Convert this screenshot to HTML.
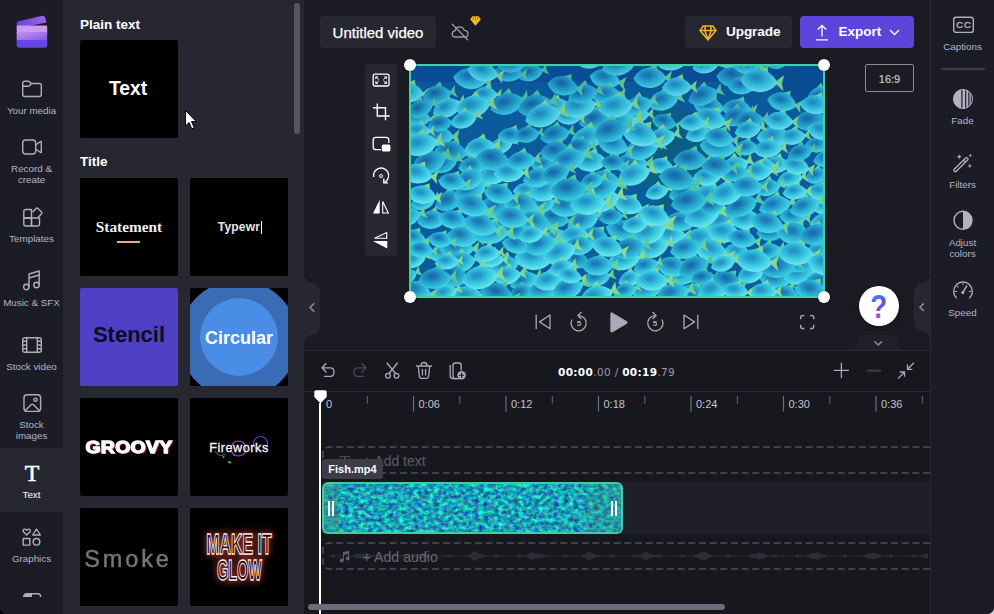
<!DOCTYPE html>
<html lang="en">
<head>
<meta charset="utf-8">
<title>Clipchamp</title>
<style>
*{box-sizing:border-box;margin:0;padding:0}
html,body{width:994px;height:614px;overflow:hidden;background:linear-gradient(90deg,#000 50%,#d4d4dc 50%);font-family:"Liberation Sans",sans-serif;color:#fff}
.abs{position:absolute}
#app{position:relative;width:994px;height:614px;overflow:hidden;background:#1b1b24;border-radius:0 0 7px 7px}
/* left sidebar */
#side{left:0;top:0;width:63px;height:614px;background:#1c1c26}
.nav{position:absolute;left:0;width:63px;text-align:center;font-size:9.8px;line-height:12px;color:#b4b4c6}
.nav svg{position:absolute;left:50%;transform:translateX(-50%)}
.nav span{position:absolute;left:0;width:63px;text-align:center;white-space:nowrap}
/* panel */
#panel{left:63px;top:0;width:241px;height:614px;background:#272731}
.hd{position:absolute;left:17px;font-size:13.5px;font-weight:bold;color:#fff}
.th{position:absolute;width:98px;height:98px;background:#000;overflow:hidden;border-radius:2px}
.th div{position:absolute;left:0;width:98px;text-align:center;white-space:nowrap}
/* right */
#right{left:930px;top:0;width:64px;height:614px;background:#1c1c26;border-left:1px solid #2a2a34}
.rn{position:absolute;left:0;width:63px;text-align:center;font-size:9.8px;line-height:12px;color:#b4b4c6}
/* timeline */
#tl{left:304px;top:350px;width:626px;height:264px;background:#17171e;border-top:1px solid #2a2a34}
.hdl{width:12px;height:12px;border-radius:50%;background:#fff;box-shadow:0 0 2px rgba(0,0,0,.5)}
</style>
</head>
<body>
<div id="app">
<div id="main" class="abs" style="left:304px;top:0;width:626px;height:350px">
 <!-- left collapse tab -->
 <svg class="abs" style="left:0;top:274px" width="17" height="70" viewBox="0 0 17 70"><path d="M0 0 Q0 7 7 9 Q16 10 16 18 V52 Q16 60 7 61 Q0 63 0 70 Z" fill="#272731"/><path d="M10.300 29.300 L6 33.500 L10.300 37.700" fill="none" stroke="#8d8d9c" stroke-width="1.500"/></svg>
 <!-- title -->
 <div class="abs" style="left:16px;top:16px;width:116px;height:32px;border-radius:4px;background:#272731;font-size:15px;line-height:33px;text-align:center;color:#fff;-webkit-text-stroke:.25px #fff">Untitled video</div>
 <!-- cloud off -->
 <svg class="abs" style="left:146px;top:22px" width="20" height="20" viewBox="0 0 20 20" fill="none" stroke="#9a9aac" stroke-width="1.300" stroke-linecap="round"><path d="M5.500 15 Q2.200 15 2.200 11.800 Q2.200 9 5.200 8.600 Q5.800 4.800 9.800 4.800 Q13.300 4.800 14.200 8.300 Q18 8.300 18 11.700 Q18 15 14.800 15 Z"/><path d="M2.300 2.300 L17.700 17.700"/></svg>
 <!-- small diamond -->
 <svg class="abs" style="left:165.500px;top:15.500px" width="11" height="10" viewBox="0 0 11 10"><path d="M2.300 .3 H8.700 L10.800 3.500 L5.500 9.700 L.2 3.500 Z" fill="#f3b62b"/><path d="M3.300 1 V4.300 M5.500 1 V4.300 M7.700 1 V4.300" stroke="#8a5a10" stroke-width=".6"/></svg>
 <!-- Upgrade -->
 <div class="abs" style="left:381px;top:16px;width:107px;height:32px;border-radius:4px;background:#272731"></div>
 <svg class="abs" style="left:394.500px;top:24.500px" width="18" height="16" viewBox="0 0 18 16" fill="none" stroke="#f3b62b" stroke-width="1.500" stroke-linejoin="round"><path d="M4.200 1 H13.800 L17 5.600 L9 14.800 L1 5.600 Z"/><path d="M1 5.600 H17 M6.300 1 L5.800 5.600 L9 14.800 L12.200 5.600 L11.700 1"/></svg>
 <div class="abs" id="t_upg" style="left:422px;top:16px;height:32px;line-height:32px;font-size:13.600px;letter-spacing:-.1px;font-weight:bold;color:#fff">Upgrade</div>
 <!-- Export -->
 <div class="abs" style="left:496px;top:16px;width:114px;height:32px;border-radius:4px;background:#5b45db"></div>
 <svg class="abs" style="left:511px;top:24px" width="14" height="17" viewBox="0 0 14 17" fill="none" stroke="#fff" stroke-width="1.300"><path d="M7 12.500 V1.500 M2.800 5.500 L7 1.300 L11.200 5.500 M1 15.800 H13"/></svg>
 <div class="abs" id="t_exp" style="left:534.500px;top:16px;height:32px;line-height:32px;font-size:13.500px;font-weight:bold;color:#fff">Export</div>
 <svg class="abs" style="left:585px;top:29px" width="11" height="7" viewBox="0 0 11 7" fill="none" stroke="#fff" stroke-width="1.300"><path d="M1 1 L5.500 5.500 L10 1"/></svg>
 <!-- tool strip -->
 <div class="abs" style="left:61px;top:64px;width:32px;height:192px;border-radius:4px;background:#272731"></div>
 <svg class="abs" style="left:61px;top:64px" width="32" height="192" viewBox="0 0 32 192" fill="none" stroke="#fff" stroke-width="1.300">
  <!-- fit -->
  <rect x="8.200" y="10.200" width="15.800" height="11.800" rx="2"/>
  <path d="M10.800 15 V12.900 H12.900 M10.800 12.900 L13.800 15.500 M21.400 15 V12.900 H19.300 M21.400 12.900 L18.400 15.500 M10.800 17.300 V19.400 H12.900 M10.800 19.400 L13.800 16.800 M21.400 17.300 V19.400 H19.300 M21.400 19.400 L18.400 16.800" stroke-width="1"/>
  <!-- crop -->
  <path d="M12.300 39.500 V52 H24.700 M8 43.700 H20.500 V56.200" stroke-width="1.400"/>
  <!-- pip -->
  <path d="M16 85.700 H11 Q8.200 85.700 8.200 83 V76 Q8.200 73.300 11 73.300 H21 Q23.800 73.300 23.800 76 V79"/>
  <rect x="16.800" y="80.600" width="8.600" height="7" rx="1.500" fill="#fff" stroke="none"/>
  <!-- rotate -->
  <path d="M8.600 113 A7.600 7.600 0 1 1 19.500 118.400"/><path d="M18.800 114.600 V118.900 H23" stroke-width="1.300"/><circle cx="16" cy="112" r="1.500" stroke-width="1"/>
  <!-- flip h -->
  <path d="M14.700 135.800 V149.500 H8 Z" fill="#fff" stroke="none"/><path d="M17.700 137.500 V149 H23.300 Z" stroke-width="1.100"/>
  <!-- flip v -->
  <path d="M21.700 168.500 V174.300 H9.500 Z" stroke-width="1.100"/><path d="M7.800 177 H22.300 V184.400 Z" fill="#fff" stroke="none"/>
 </svg>
 <!-- video -->
 <div class="abs" style="left:105px;top:64px;width:416px;height:234px;background:#3fd2a4"></div>
 <div class="abs" style="left:107px;top:66px;width:412px;height:230px;overflow:hidden"><svg width="412" height="230" viewBox="0 0 412 230"><defs><radialGradient id="mg0" cx="42%" cy="38%" r="62%"><stop offset=".12" stop-color="#1c7ab8"/><stop offset=".55" stop-color="#2ab4d6"/><stop offset="1" stop-color="#50dcea"/></radialGradient><g id="m0"><path d="M9 0 L14.500 -5 L13.500 0 L15 4.500 ZM-1 -6.500 L4 -9.500 L5 -5 Z" fill="#68d092"/><path d="M-11 0.500 Q-7 -7.500 2 -7 Q8 -5 11 0 Q8 5.500 1 6.500 Q-7 7 -11 0.500 Z" fill="url(#mg0)"/></g><radialGradient id="mg1" cx="42%" cy="38%" r="62%"><stop offset=".12" stop-color="#2294c6"/><stop offset=".55" stop-color="#38c8e0"/><stop offset="1" stop-color="#6ee8f0"/></radialGradient><g id="m1"><path d="M9 0 L14.500 -5 L13.500 0 L15 4.500 ZM-1 -6.500 L4 -9.500 L5 -5 Z" fill="#86d88a"/><path d="M-11 0.500 Q-7 -7.500 2 -7 Q8 -5 11 0 Q8 5.500 1 6.500 Q-7 7 -11 0.500 Z" fill="url(#mg1)"/></g><radialGradient id="mg2" cx="42%" cy="38%" r="62%"><stop offset=".12" stop-color="#186eac"/><stop offset=".55" stop-color="#24a2cc"/><stop offset="1" stop-color="#3ed0e2"/></radialGradient><g id="m2"><path d="M9 0 L14.500 -5 L13.500 0 L15 4.500 ZM-1 -6.500 L4 -9.500 L5 -5 Z" fill="#58c69a"/><path d="M-11 0.500 Q-7 -7.500 2 -7 Q8 -5 11 0 Q8 5.500 1 6.500 Q-7 7 -11 0.500 Z" fill="url(#mg2)"/></g></defs><rect width="412" height="230" fill="#0b5c9e"/><rect width="412" height="16" fill="#0a4f96"/><ellipse cx="262" cy="92" rx="36" ry="50" fill="#0b5f86"/><rect x="372" y="0" width="40" height="40" fill="#0a4f96"/><rect x="0" y="100" width="60" height="45" fill="#0a5298"/><use href="#m0" transform="translate(172 155) rotate(-21) scale(1.54)"/><use href="#m1" transform="translate(312 155) rotate(-21) scale(1.69)"/><use href="#m0" transform="translate(192 116) rotate(1) scale(1.65)"/><use href="#m0" transform="translate(271 208) rotate(-2) scale(1.66)"/><use href="#m1" transform="translate(250 100) rotate(9) scale(1.14)"/><use href="#m1" transform="translate(36 42) rotate(-21) scale(1.39)"/><use href="#m2" transform="translate(323 11) rotate(5) scale(1.61)"/><use href="#m0" transform="translate(4 51) rotate(9) scale(1.46)"/><use href="#m1" transform="translate(413 140) rotate(-4) scale(1.24)"/><use href="#m2" transform="translate(143 152) rotate(12) scale(1.43)"/><use href="#m2" transform="translate(38 135) rotate(-21) scale(1.40)"/><use href="#m0" transform="translate(335 82) rotate(-4) scale(1.13)"/><use href="#m1" transform="translate(259 169) rotate(2) scale(1.46)"/><use href="#m0" transform="translate(364 214) rotate(7) scale(1.40)"/><use href="#m2" transform="translate(253 56) rotate(14) scale(1.14)"/><use href="#m0" transform="translate(26 70) rotate(3) scale(1.53)"/><use href="#m2" transform="translate(29 58) rotate(-9) scale(1.13)"/><use href="#m1" transform="translate(390 208) rotate(-15) scale(1.59)"/><use href="#m0" transform="translate(21 154) rotate(-7) scale(1.35)"/><use href="#m0" transform="translate(211 165) rotate(16) scale(1.52)"/><use href="#m0" transform="translate(298 41) rotate(8) scale(1.39)"/><use href="#m0" transform="translate(59 125) rotate(-20) scale(1.55)"/><use href="#m2" transform="translate(292 30) rotate(-18) scale(1.42)"/><use href="#m0" transform="translate(113 215) rotate(-19) scale(1.35)"/><use href="#m2" transform="translate(40 86) rotate(7) scale(1.51)"/><use href="#m2" transform="translate(119 7) rotate(-12) scale(1.24)"/><use href="#m1" transform="translate(145 40) rotate(-13) scale(1.15)"/><use href="#m0" transform="translate(411 217) rotate(2) scale(1.69)"/><use href="#m0" transform="translate(133 99) rotate(1) scale(1.20)"/><use href="#m2" transform="translate(279 94) rotate(1) scale(1.54)"/><use href="#m0" transform="translate(2 172) rotate(12) scale(1.21)"/><use href="#m0" transform="translate(335 -1) rotate(9) scale(1.33)"/><use href="#m1" transform="translate(225 49) rotate(-3) scale(1.23)"/><use href="#m1" transform="translate(242 182) rotate(-15) scale(1.48)"/><use href="#m2" transform="translate(165 194) rotate(16) scale(1.27)"/><use href="#m1" transform="translate(246 126) rotate(-15) scale(1.11)"/><use href="#m0" transform="translate(269 156) rotate(4) scale(1.44)"/><use href="#m0" transform="translate(416 93) rotate(-8) scale(1.26)"/><use href="#m0" transform="translate(59 13) rotate(9) scale(1.54)"/><use href="#m1" transform="translate(238 167) rotate(-21) scale(1.64)"/><use href="#m1" transform="translate(290 173) rotate(-4) scale(1.60)"/><use href="#m2" transform="translate(387 198) rotate(9) scale(1.30)"/><use href="#m2" transform="translate(184 54) rotate(-10) scale(1.50)"/><use href="#m2" transform="translate(110 227) rotate(-16) scale(1.12)"/><use href="#m1" transform="translate(287 68) rotate(-14) scale(1.18)"/><use href="#m1" transform="translate(157 51) rotate(6) scale(1.18)"/><use href="#m0" transform="translate(93 199) rotate(-7) scale(1.37)"/><use href="#m1" transform="translate(363 71) rotate(-1) scale(1.60)"/><use href="#m0" transform="translate(374 229) rotate(13) scale(1.33)"/><use href="#m1" transform="translate(416 50) rotate(-21) scale(1.12)"/><use href="#m1" transform="translate(260 -6) rotate(0) scale(1.61)"/><use href="#m0" transform="translate(62 100) rotate(-6) scale(1.36)"/><use href="#m1" transform="translate(217 139) rotate(15) scale(1.39)"/><use href="#m1" transform="translate(144 172) rotate(-16) scale(1.27)"/><use href="#m1" transform="translate(326 186) rotate(9) scale(1.22)"/><use href="#m0" transform="translate(364 140) rotate(-12) scale(1.50)"/><use href="#m0" transform="translate(400 225) rotate(14) scale(1.55)"/><use href="#m2" transform="translate(144 69) rotate(-12) scale(1.39)"/><use href="#m1" transform="translate(340 208) rotate(-20) scale(1.34)"/><use href="#m1" transform="translate(168 41) rotate(-10) scale(1.61)"/><use href="#m1" transform="translate(90 80) rotate(-21) scale(1.14)"/><use href="#m0" transform="translate(252 35) rotate(-12) scale(1.44)"/><use href="#m0" transform="translate(236 223) rotate(-13) scale(1.52)"/><use href="#m1" transform="translate(313 167) rotate(3) scale(1.48)"/><use href="#m0" transform="translate(58 114) rotate(-19) scale(1.47)"/><use href="#m1" transform="translate(74 29) rotate(-2) scale(1.18)"/><use href="#m0" transform="translate(382 151) rotate(5) scale(1.24)"/><use href="#m0" transform="translate(-6 211) rotate(-21) scale(1.16)"/><use href="#m0" transform="translate(154 141) rotate(5) scale(1.52)"/><use href="#m2" transform="translate(96 38) rotate(-16) scale(1.59)"/><use href="#m1" transform="translate(62 41) rotate(-10) scale(1.58)"/><use href="#m0" transform="translate(220 98) rotate(-1) scale(1.55)"/><use href="#m2" transform="translate(97 7) rotate(6) scale(1.32)"/><use href="#m1" transform="translate(365 99) rotate(-2) scale(1.25)"/><use href="#m1" transform="translate(409 126) rotate(3) scale(1.25)"/><use href="#m1" transform="translate(213 194) rotate(-9) scale(1.53)"/><use href="#m2" transform="translate(124 40) rotate(-14) scale(1.61)"/><use href="#m0" transform="translate(132 225) rotate(-5) scale(1.44)"/><use href="#m0" transform="translate(261 201) rotate(11) scale(1.47)"/><use href="#m1" transform="translate(224 159) rotate(-7) scale(1.18)"/><use href="#m0" transform="translate(357 186) rotate(-15) scale(1.24)"/><use href="#m0" transform="translate(326 43) rotate(6) scale(1.38)"/><use href="#m1" transform="translate(295 -1) rotate(-12) scale(1.26)"/><use href="#m0" transform="translate(12 136) rotate(-16) scale(1.18)"/><use href="#m2" transform="translate(366 -5) rotate(-8) scale(1.22)"/><use href="#m2" transform="translate(33 98) rotate(-21) scale(1.30)"/><use href="#m0" transform="translate(231 83) rotate(-15) scale(1.61)"/><use href="#m1" transform="translate(177 72) rotate(-11) scale(1.60)"/><use href="#m2" transform="translate(325 51) rotate(-16) scale(1.34)"/><use href="#m0" transform="translate(239 12) rotate(-0) scale(1.52)"/><use href="#m1" transform="translate(72 6) rotate(14) scale(1.43)"/><use href="#m2" transform="translate(368 201) rotate(-11) scale(1.63)"/><use href="#m1" transform="translate(115 125) rotate(3) scale(1.19)"/><use href="#m0" transform="translate(409 30) rotate(-19) scale(1.29)"/><use href="#m1" transform="translate(219 213) rotate(-19) scale(1.13)"/><use href="#m1" transform="translate(84 108) rotate(-22) scale(1.50)"/><use href="#m0" transform="translate(184 171) rotate(18) scale(1.39)"/><use href="#m0" transform="translate(85 141) rotate(-6) scale(1.69)"/><use href="#m1" transform="translate(11 129) rotate(10) scale(1.35)"/><use href="#m2" transform="translate(359 167) rotate(3) scale(1.23)"/><use href="#m1" transform="translate(31 187) rotate(-14) scale(1.25)"/><use href="#m1" transform="translate(300 185) rotate(18) scale(1.62)"/><use href="#m0" transform="translate(202 79) rotate(16) scale(1.44)"/><use href="#m0" transform="translate(406 110) rotate(-15) scale(1.12)"/><use href="#m0" transform="translate(274 127) rotate(-11) scale(1.50)"/><use href="#m0" transform="translate(331 20) rotate(-1) scale(1.29)"/><use href="#m2" transform="translate(200 151) rotate(-7) scale(1.14)"/><use href="#m1" transform="translate(408 185) rotate(-12) scale(1.26)"/><use href="#m0" transform="translate(331 173) rotate(10) scale(1.34)"/><use href="#m1" transform="translate(298 130) rotate(-3) scale(1.66)"/><use href="#m2" transform="translate(18 97) rotate(-21) scale(1.65)"/><use href="#m1" transform="translate(379 113) rotate(-9) scale(1.18)"/><use href="#m1" transform="translate(138 215) rotate(-11) scale(1.40)"/><use href="#m1" transform="translate(180 96) rotate(-4) scale(1.48)"/><use href="#m1" transform="translate(385 100) rotate(14) scale(1.27)"/><use href="#m0" transform="translate(46 183) rotate(-0) scale(1.55)"/><use href="#m0" transform="translate(131 139) rotate(-18) scale(1.21)"/><use href="#m1" transform="translate(335 154) rotate(-6) scale(1.40)"/><use href="#m0" transform="translate(110 139) rotate(12) scale(1.67)"/><use href="#m0" transform="translate(214 225) rotate(-15) scale(1.11)"/><use href="#m1" transform="translate(223 109) rotate(-18) scale(1.55)"/><use href="#m1" transform="translate(132 50) rotate(-13) scale(1.68)"/><use href="#m0" transform="translate(383 168) rotate(11) scale(1.63)"/><use href="#m1" transform="translate(299 53) rotate(16) scale(1.51)"/><use href="#m1" transform="translate(69 82) rotate(-8) scale(1.47)"/><use href="#m2" transform="translate(145 86) rotate(-2) scale(1.48)"/><use href="#m1" transform="translate(191 135) rotate(-17) scale(1.65)"/><use href="#m1" transform="translate(163 170) rotate(-3) scale(1.36)"/><use href="#m2" transform="translate(338 55) rotate(-7) scale(1.40)"/><use href="#m1" transform="translate(323 101) rotate(-21) scale(1.41)"/><use href="#m1" transform="translate(352 226) rotate(-1) scale(1.29)"/><use href="#m1" transform="translate(122 193) rotate(8) scale(1.70)"/><use href="#m2" transform="translate(168 81) rotate(-3) scale(1.21)"/><use href="#m1" transform="translate(135 124) rotate(-17) scale(1.62)"/><use href="#m0" transform="translate(235 200) rotate(-15) scale(1.17)"/><use href="#m2" transform="translate(82 94) rotate(10) scale(1.60)"/><use href="#m0" transform="translate(186 212) rotate(-12) scale(1.25)"/><use href="#m1" transform="translate(56 231) rotate(6) scale(1.62)"/><use href="#m0" transform="translate(127 112) rotate(-8) scale(1.41)"/><use href="#m0" transform="translate(88 128) rotate(13) scale(1.42)"/><use href="#m0" transform="translate(42 154) rotate(16) scale(1.39)"/><use href="#m1" transform="translate(7 65) rotate(0) scale(1.14)"/><use href="#m0" transform="translate(406 79) rotate(-2) scale(1.14)"/><use href="#m0" transform="translate(194 13) rotate(14) scale(1.43)"/><use href="#m0" transform="translate(105 179) rotate(15) scale(1.30)"/><use href="#m0" transform="translate(158 94) rotate(-17) scale(1.60)"/><use href="#m2" transform="translate(283 201) rotate(-21) scale(1.47)"/><use href="#m0" transform="translate(168 180) rotate(-2) scale(1.38)"/><use href="#m1" transform="translate(291 150) rotate(-14) scale(1.69)"/><use href="#m0" transform="translate(281 230) rotate(7) scale(1.63)"/><use href="#m1" transform="translate(96 210) rotate(-9) scale(1.30)"/><use href="#m0" transform="translate(49 197) rotate(-14) scale(1.49)"/><use href="#m2" transform="translate(302 140) rotate(-17) scale(1.21)"/><use href="#m0" transform="translate(227 40) rotate(-17) scale(1.38)"/><use href="#m0" transform="translate(275 183) rotate(-10) scale(1.47)"/><use href="#m1" transform="translate(348 15) rotate(6) scale(1.70)"/><use href="#m0" transform="translate(262 228) rotate(-14) scale(1.56)"/><use href="#m2" transform="translate(399 55) rotate(-5) scale(1.48)"/><use href="#m0" transform="translate(195 29) rotate(-2) scale(1.37)"/><use href="#m2" transform="translate(218 183) rotate(-13) scale(1.52)"/><use href="#m1" transform="translate(34 227) rotate(-17) scale(1.17)"/><use href="#m1" transform="translate(250 72) rotate(-14) scale(1.39)"/><use href="#m1" transform="translate(352 101) rotate(-5) scale(1.14)"/><use href="#m1" transform="translate(-3 27) rotate(4) scale(1.45)"/><use href="#m0" transform="translate(51 171) rotate(5) scale(1.52)"/><use href="#m2" transform="translate(292 212) rotate(-7) scale(1.11)"/><use href="#m1" transform="translate(9 79) rotate(-12) scale(1.64)"/><use href="#m2" transform="translate(101 -2) rotate(-7) scale(1.32)"/><use href="#m0" transform="translate(123 157) rotate(16) scale(1.64)"/><use href="#m0" transform="translate(191 123) rotate(-16) scale(1.50)"/><use href="#m1" transform="translate(296 111) rotate(-3) scale(1.32)"/><use href="#m0" transform="translate(157 223) rotate(-20) scale(1.49)"/><use href="#m1" transform="translate(229 69) rotate(18) scale(1.69)"/><use href="#m0" transform="translate(394 141) rotate(-18) scale(1.42)"/><use href="#m1" transform="translate(384 126) rotate(-4) scale(1.14)"/><use href="#m2" transform="translate(86 228) rotate(15) scale(1.57)"/><use href="#m1" transform="translate(208 58) rotate(-14) scale(1.69)"/><use href="#m1" transform="translate(343 195) rotate(6) scale(1.68)"/><use href="#m1" transform="translate(243 150) rotate(17) scale(1.50)"/><use href="#m1" transform="translate(303 224) rotate(-17) scale(1.57)"/><use href="#m1" transform="translate(382 71) rotate(-7) scale(1.19)"/><use href="#m1" transform="translate(182 -9) rotate(-21) scale(1.64)"/><use href="#m0" transform="translate(307 81) rotate(9) scale(1.68)"/><use href="#m1" transform="translate(415 157) rotate(-2) scale(1.50)"/><use href="#m0" transform="translate(41 116) rotate(9) scale(1.28)"/><use href="#m2" transform="translate(316 215) rotate(18) scale(1.38)"/><use href="#m1" transform="translate(266 21) rotate(0) scale(1.37)"/><use href="#m2" transform="translate(40 210) rotate(10) scale(1.64)"/><use href="#m2" transform="translate(103 165) rotate(17) scale(1.19)"/><use href="#m0" transform="translate(100 70) rotate(3) scale(1.20)"/><use href="#m0" transform="translate(181 115) rotate(-16) scale(1.11)"/><use href="#m0" transform="translate(101 152) rotate(7) scale(1.54)"/><use href="#m1" transform="translate(79 193) rotate(3) scale(1.28)"/><use href="#m2" transform="translate(116 69) rotate(-10) scale(1.17)"/><use href="#m1" transform="translate(185 231) rotate(-20) scale(1.61)"/><use href="#m0" transform="translate(79 167) rotate(0) scale(1.70)"/><use href="#m0" transform="translate(187 200) rotate(-2) scale(1.44)"/><use href="#m2" transform="translate(26 29) rotate(-10) scale(1.34)"/><use href="#m1" transform="translate(347 106) rotate(-5) scale(1.32)"/><use href="#m1" transform="translate(368 55) rotate(4) scale(1.33)"/><use href="#m0" transform="translate(29 174) rotate(11) scale(1.13)"/><use href="#m1" transform="translate(76 188) rotate(-7) scale(1.20)"/><use href="#m0" transform="translate(-4 151) rotate(-13) scale(1.34)"/><use href="#m1" transform="translate(149 187) rotate(-21) scale(1.53)"/><use href="#m2" transform="translate(172 28) rotate(-13) scale(1.39)"/><use href="#m1" transform="translate(196 181) rotate(16) scale(1.46)"/><use href="#m1" transform="translate(385 188) rotate(6) scale(1.68)"/><use href="#m1" transform="translate(98 107) rotate(-1) scale(1.40)"/><use href="#m1" transform="translate(3 194) rotate(-18) scale(1.13)"/><use href="#m1" transform="translate(6 108) rotate(10) scale(1.45)"/><use href="#m2" transform="translate(145 108) rotate(-18) scale(1.32)"/><use href="#m0" transform="translate(130 179) rotate(-19) scale(1.51)"/><use href="#m1" transform="translate(205 41) rotate(-9) scale(1.60)"/><use href="#m2" transform="translate(330 140) rotate(-20) scale(1.56)"/><use href="#m1" transform="translate(150 202) rotate(-16) scale(1.15)"/><use href="#m0" transform="translate(10 184) rotate(5) scale(1.15)"/><use href="#m1" transform="translate(357 83) rotate(-4) scale(1.33)"/><use href="#m0" transform="translate(371 36) rotate(14) scale(1.37)"/><use href="#m2" transform="translate(278 136) rotate(-8) scale(1.67)"/><use href="#m1" transform="translate(316 128) rotate(-18) scale(1.62)"/><use href="#m0" transform="translate(5 225) rotate(12) scale(1.42)"/><use href="#m1" transform="translate(120 169) rotate(-11) scale(1.19)"/><use href="#m1" transform="translate(36 196) rotate(-5) scale(1.12)"/><use href="#m1" transform="translate(324 225) rotate(6) scale(1.22)"/><use href="#m1" transform="translate(404 39) rotate(6) scale(1.40)"/><use href="#m2" transform="translate(152 20) rotate(12) scale(1.43)"/><use href="#m1" transform="translate(159 210) rotate(11) scale(1.11)"/><use href="#m1" transform="translate(315 -7) rotate(10) scale(1.33)"/><use href="#m0" transform="translate(308 72) rotate(9) scale(1.38)"/><use href="#m1" transform="translate(69 212) rotate(-9) scale(1.69)"/><use href="#m1" transform="translate(337 64) rotate(-12) scale(1.24)"/><use href="#m1" transform="translate(53 54) rotate(-19) scale(1.25)"/><use href="#m2" transform="translate(24 213) rotate(-5) scale(1.53)"/><use href="#m1" transform="translate(312 198) rotate(-15) scale(1.14)"/><use href="#m1" transform="translate(177 138) rotate(-4) scale(1.65)"/><use href="#m2" transform="translate(389 87) rotate(-15) scale(1.17)"/><use href="#m0" transform="translate(325 108) rotate(-10) scale(1.16)"/><use href="#m2" transform="translate(202 97) rotate(6) scale(1.12)"/><use href="#m1" transform="translate(281 57) rotate(-2) scale(1.20)"/><use href="#m2" transform="translate(266 113) rotate(12) scale(1.69)"/><use href="#m0" transform="translate(357 122) rotate(-14) scale(1.20)"/><use href="#m1" transform="translate(414 199) rotate(15) scale(1.64)"/><use href="#m1" transform="translate(410 65) rotate(16) scale(1.32)"/><use href="#m0" transform="translate(69 159) rotate(17) scale(1.60)"/><use href="#m2" transform="translate(9 43) rotate(-21) scale(1.25)"/><use href="#m2" transform="translate(405 169) rotate(-11) scale(1.50)"/><use href="#m0" transform="translate(61 140) rotate(16) scale(1.58)"/><use href="#m2" transform="translate(200 65) rotate(-16) scale(1.62)"/><use href="#m0" transform="translate(336 121) rotate(-0) scale(1.47)"/><use href="#m2" transform="translate(306 101) rotate(4) scale(1.42)"/><use href="#m0" transform="translate(208 -1) rotate(-12) scale(1.57)"/><use href="#m1" transform="translate(241 215) rotate(-0) scale(1.49)"/><use href="#m0" transform="translate(110 95) rotate(-7) scale(1.37)"/><use href="#m2" transform="translate(158 124) rotate(-2) scale(1.67)"/><use href="#m0" transform="translate(356 157) rotate(13) scale(1.54)"/><defs><linearGradient id="mv" x1="0" y1="0" x2="0" y2="1"><stop offset="0" stop-color="#053c8c" stop-opacity=".12"/><stop offset=".55" stop-color="#053c8c" stop-opacity="0"/></linearGradient></defs><rect width="412" height="230" fill="url(#mv)"/></svg></div>
 <i class="abs hdl" style="left:100px;top:59px"></i><i class="abs hdl" style="left:514px;top:59px"></i><i class="abs hdl" style="left:100px;top:291px"></i><i class="abs hdl" style="left:514px;top:291px"></i>
 <!-- 16:9 -->
 <div class="abs" style="left:561px;top:64px;width:49px;height:28px;border:1px solid #8b8b98;border-radius:2px;font-size:11px;line-height:29px;text-align:center;color:#c6c6d2;-webkit-text-stroke:.2px #c6c6d2">16:9</div>
 <!-- playback -->
 <svg class="abs" style="left:226px;top:308px" width="290" height="30" viewBox="0 0 290 30" fill="none" stroke="#a9a9b9" stroke-width="1.300" stroke-linejoin="round">
  <path d="M6.200 6.800 V21 M20 7 V20.800 L9.500 13.900 Z"/>
  <path d="M42 11.500 A7.600 7.600 0 1 0 49 7.600"/><path d="M51.500 4 L47.800 7.600 L51.500 11" /><path d="M49 7.600 H52" stroke="none"/>
  <path d="M81 5.800 V23 Q81 24.200 82.200 23.600 L96.500 15.200 Q97.300 14.500 96.500 13.800 L82.200 5.200 Q81 4.600 81 5.800 Z" fill="#a9a9b9"/>
  <path d="M132 11.500 A7.600 7.600 0 1 1 125 7.600"/><path d="M122.500 4 L126.200 7.600 L122.500 11"/>
  <path d="M167.800 6.800 V21 M154 7 V20.800 L164.500 13.900 Z"/>
  <path d="M270.700 11.300 V9 Q270.700 7.600 272.100 7.600 H274.400 M280 7.600 H282.300 Q283.700 7.600 283.700 9 V11.300 M283.700 16.800 V19.100 Q283.700 20.500 282.300 20.500 H280 M274.400 20.500 H272.100 Q270.700 20.500 270.700 19.100 V16.800" stroke-width="1.400"/>
  <text x="49" y="18.200" font-family="Liberation Sans, sans-serif" font-size="8" font-weight="bold" fill="#a9a9b9" stroke="none" text-anchor="middle">5</text>
  <text x="125" y="18.200" font-family="Liberation Sans, sans-serif" font-size="8" font-weight="bold" fill="#a9a9b9" stroke="none" text-anchor="middle">5</text>
 </svg>
 <!-- help -->
 <div class="abs" style="left:555px;top:285.700px;width:40px;height:40px;border-radius:50%;background:#fff;box-shadow:0 1px 4px rgba(0,0,0,.4)"></div>
 <svg class="abs" style="left:555px;top:285.700px" width="40" height="40" viewBox="0 0 40 40"><defs><linearGradient id="qg" x1="0" y1="0" x2=".4" y2="1"><stop offset="0" stop-color="#5b3fd9"/><stop offset=".35" stop-color="#3f7af0"/><stop offset=".62" stop-color="#5b4fe0"/><stop offset=".85" stop-color="#b052e6"/></linearGradient></defs><text transform="translate(19.800 32.300) scale(.84 1)" text-anchor="middle" font-family="Liberation Sans, sans-serif" font-weight="bold" font-size="33" fill="url(#qg)">?</text></svg>
 <!-- bottom collapse tab -->
 <svg class="abs" style="left:548px;top:334px" width="52" height="16" viewBox="0 0 52 16"><path d="M0 16 Q4 16 5 9 Q6 1 12 1 H40 Q46 1 47 9 Q48 16 52 16 Z" fill="#20202a"/><path d="M22.400 7.300 L26.200 11 L30 7.300" fill="none" stroke="#8d8d9c" stroke-width="1.400"/></svg>
 <!-- right collapse tab -->
 <svg class="abs" style="left:609px;top:274px" width="17" height="70" viewBox="0 0 17 70"><path d="M17 0 Q17 7 10 9 Q1 10 1 18 V48 Q1 56 10 57 Q17 59 17 65 Z" fill="#272731"/><path d="M10.800 29.400 L7 33.200 L10.800 37" fill="none" stroke="#8d8d9c" stroke-width="1.500"/></svg>
</div>

<div id="tl" class="abs">
 <!-- toolbar icons -->
 <svg class="abs" style="left:12px;top:8px" width="160" height="26" viewBox="0 0 160 26" fill="none" stroke="#a9a9b9" stroke-width="1.300" stroke-linecap="round" stroke-linejoin="round">
  <path d="M10 4.500 L6 8.800 L10 13 M6.300 8.800 H14.500 Q18 8.800 18 13 Q18 17.300 14.500 17.300 H8.500"/>
  <path d="M46 4.500 L50 8.800 L46 13 M49.700 8.800 H41.500 Q38 8.800 38 13 Q38 17.300 41.500 17.300 H47.500" stroke="#494957"/>
  <path d="M71 4 L79.500 14.500 M81.500 4 L73 14.500"/><circle cx="72" cy="16.800" r="2.400"/><circle cx="80.500" cy="16.800" r="2.400"/>
  <path d="M100.500 7 H115.500 M105 6.700 Q105 3.500 108 3.500 Q111 3.500 111 6.700 M102.300 7.300 L103.300 17.300 Q103.500 19.300 105.500 19.300 H110.500 Q112.500 19.300 112.700 17.300 L113.700 7.300 M106.400 10.300 V16 M109.600 10.300 V16"/>
  <path d="M134.200 6.500 V17 Q134.200 19.500 136.700 19.500 H141"/><path d="M144 15 V19.600 H139.200 Q137 19.600 137 17.400 V6.200 Q137 4 139.200 4 H143 Q145.200 4 145.200 6.200 V11"/>
  <circle cx="145.600" cy="16.300" r="4.200" fill="#a9a9b9" stroke="none"/><path d="M143.400 16.300 H147.800 M145.600 14.100 V18.500" stroke="#17171e" stroke-width="1.100"/>
 </svg>
 <div class="abs" id="t_time" style="left:254px;top:13.600px;height:14px;line-height:14px;font-family:'DejaVu Sans','Liberation Sans',sans-serif;font-size:10.500px;font-weight:bold;color:#fff;white-space:nowrap;letter-spacing:.35px">00:00<span style="font-weight:normal;color:#9a9aaa">.00</span><span style="font-weight:normal;color:#9a9aaa"> / </span>00:19<span style="font-weight:normal;color:#9a9aaa">.79</span></div>
 <svg class="abs" style="left:524px;top:7.200px" width="96" height="26" viewBox="0 0 96 26" fill="none" stroke="#a9a9b9" stroke-width="1.300">
  <path d="M13.400 4.800 V20 M5.800 12.400 H21"/>
  <path d="M39 12.700 H53" stroke="#3b3b49" stroke-width="2"/>
  <path d="M86 4.800 L79.500 11.300 M79.500 6.500 V11.300 H84.300 M70 20.600 L76.500 14 M71.700 14 H76.500 V18.800"/>
 </svg>
 <!-- ruler -->
 <div class="abs" style="left:0;top:40px;width:626px;height:1px;background:#2a2a34"></div>
 <svg class="abs" style="left:0;top:41px" width="626" height="30" viewBox="0 0 626 30" font-family="Liberation Sans, sans-serif" font-size="11" fill="#c4c4d0">
  <path d="M109.500 4 V19.500 M202 4 V19.500 M294.500 4 V19.500 M387 4 V19.500 M479.500 4 V19.500 M572 4 V19.500" stroke="#6d6d7b" stroke-width="1.200"/>
  <path d="M63.300 4 V11.500 M155.800 4 V11.500 M248.300 4 V11.500 M340.800 4 V11.500 M433.300 4 V11.500 M525.800 4 V11.500 M618.300 4 V11.500" stroke="#6d6d7b" stroke-width="1"/>
  <text x="22" y="16">0</text><text x="114.500" y="16">0:06</text><text x="207" y="16">0:12</text><text x="299.500" y="16">0:18</text><text x="392" y="16">0:24</text><text x="484.500" y="16">0:30</text><text x="577" y="16">0:36</text>
 </svg>
 <!-- tracks -->
 <svg class="abs" style="left:0;top:90px" width="626" height="135" viewBox="0 0 626 135" fill="none">
  <path d="M626 6 H26 Q19 6 19 13 V25 Q19 32 26 32 H626" stroke="#4d4d5a" stroke-width="1.500" stroke-dasharray="7 3.670"/>
  <rect x="18" y="41" width="608" height="52" fill="#1f1f29"/>
  <path transform="translate(0 115)" d="M26 -0.6 28 -1.4 30 -1.5 32 -0.6 34 -0.5 36 -0.5 38 -0.5 40 -0.5 42 -0.5 44 -0.5 46 -0.5 48 -0.5 50 -1.0 52 -2.0 54 -2.3 56 -2.6 58 -1.9 60 -2.6 62 -2.5 64 -3.1 66 -1.8 68 -0.8 70 -0.6 72 -0.5 74 -1.2 76 -1.6 78 -0.8 80 -0.5 82 -0.5 84 -0.5 86 -0.5 88 -0.5 90 -0.5 92 -0.5 94 -0.5 96 -0.7 98 -1.5 100 -1.4 102 -0.6 104 -0.5 106 -0.6 108 -0.8 110 -1.3 112 -1.7 114 -2.1 116 -2.1 118 -2.7 120 -3.2 122 -2.4 124 -1.7 126 -0.6 128 -0.5 130 -0.5 132 -0.5 134 -0.5 136 -0.5 138 -0.5 140 -0.5 142 -0.6 144 -1.3 146 -1.6 148 -0.7 150 -0.5 152 -0.5 154 -0.5 156 -0.5 158 -0.5 160 -0.5 162 -0.5 164 -0.9 166 -1.3 168 -3.5 170 -4.4 172 -4.5 174 -2.8 176 -2.4 178 -2.0 180 -1.4 182 -0.6 184 -0.5 186 -0.5 188 -0.5 190 -1.1 192 -1.7 194 -0.9 196 -0.5 198 -0.5 200 -0.5 202 -0.5 204 -0.5 206 -0.5 208 -0.5 210 -0.5 212 -0.6 214 -1.4 216 -1.5 218 -0.7 220 -0.7 222 -0.9 224 -1.2 226 -3.5 228 -3.3 230 -3.1 232 -2.3 234 -2.4 236 -2.0 238 -2.0 240 -1.2 242 -0.5 244 -0.5 246 -0.5 248 -0.5 250 -0.5 252 -0.5 254 -0.5 256 -0.5 258 -0.5 260 -1.2 262 -1.6 264 -0.8 266 -0.5 268 -0.5 270 -0.5 272 -0.5 274 -0.5 276 -0.6 278 -1.1 280 -1.5 282 -2.5 284 -4.7 286 -4.1 288 -2.7 290 -2.2 292 -1.2 294 -0.9 296 -0.7 298 -0.5 300 -0.5 302 -0.5 304 -0.5 306 -1.0 308 -1.7 310 -1.0 312 -0.5 314 -0.5 316 -0.5 318 -0.5 320 -0.5 322 -0.5 324 -0.5 326 -0.5 328 -0.6 330 -1.3 332 -1.6 334 -1.1 336 -1.5 338 -1.8 340 -3.9 342 -3.7 344 -3.4 346 -1.6 348 -1.9 350 -1.0 352 -1.0 354 -1.7 356 -1.2 358 -0.6 360 -0.5 362 -0.5 364 -0.5 366 -0.5 368 -0.5 370 -0.5 372 -0.5 374 -0.5 376 -1.1 378 -1.7 380 -0.9 382 -0.5 384 -0.5 386 -0.5 388 -0.5 390 -0.8 392 -1.2 394 -2.2 396 -3.2 398 -4.0 400 -3.4 402 -4.4 404 -2.3 406 -1.4 408 -0.8 410 -0.6 412 -0.5 414 -0.5 416 -0.5 418 -0.5 420 -0.5 422 -0.9 424 -1.7 426 -1.1 428 -0.5 430 -0.5 432 -0.5 434 -0.5 436 -0.5 438 -0.5 440 -0.5 442 -0.5 444 -0.6 446 -1.3 448 -1.9 450 -1.9 452 -2.3 454 -3.4 456 -3.6 458 -2.4 460 -3.0 462 -1.0 464 -0.8 466 -0.6 468 -0.7 470 -1.6 472 -1.4 474 -0.6 476 -0.5 478 -0.5 480 -0.5 482 -0.5 484 -0.5 486 -0.5 488 -0.5 490 -0.5 492 -1.0 494 -1.7 496 -1.0 498 -0.5 500 -0.5 502 -0.6 504 -0.9 506 -1.9 508 -3.1 510 -3.3 512 -2.9 514 -4.2 516 -2.4 518 -2.3 520 -1.2 522 -0.7 524 -0.5 526 -0.5 528 -0.5 530 -0.5 532 -0.5 534 -0.5 536 -0.5 538 -0.8 540 -1.6 542 -1.2 544 -0.5 546 -0.5 548 -0.5 550 -0.5 552 -0.5 554 -0.5 556 -0.5 558 -0.6 560 -0.8 562 -1.7 564 -3.2 566 -2.3 568 -3.6 570 -3.1 572 -2.3 574 -2.3 576 -1.4 578 -0.6 580 -0.5 582 -0.5 584 -0.6 586 -1.5 588 -1.5 590 -0.6 592 -0.5 594 -0.5 596 -0.5 598 -0.5 600 -0.5 602 -0.5 604 -0.5 606 -0.5 608 -0.9 610 -1.7 612 -1.1 614 -0.6 616 -0.7 618 -1.0 620 -1.9 622 -2.6 624 -2.8 L624 2.8 622 2.6 620 1.9 618 1.0 616 0.7 614 0.6 612 1.1 610 1.7 608 0.9 606 0.5 604 0.5 602 0.5 600 0.5 598 0.5 596 0.5 594 0.5 592 0.5 590 0.6 588 1.5 586 1.5 584 0.6 582 0.5 580 0.5 578 0.6 576 1.4 574 2.3 572 2.3 570 3.1 568 3.6 566 2.3 564 3.2 562 1.7 560 0.8 558 0.6 556 0.5 554 0.5 552 0.5 550 0.5 548 0.5 546 0.5 544 0.5 542 1.2 540 1.6 538 0.8 536 0.5 534 0.5 532 0.5 530 0.5 528 0.5 526 0.5 524 0.5 522 0.7 520 1.2 518 2.3 516 2.4 514 4.2 512 2.9 510 3.3 508 3.1 506 1.9 504 0.9 502 0.6 500 0.5 498 0.5 496 1.0 494 1.7 492 1.0 490 0.5 488 0.5 486 0.5 484 0.5 482 0.5 480 0.5 478 0.5 476 0.5 474 0.6 472 1.4 470 1.6 468 0.7 466 0.6 464 0.8 462 1.0 460 3.0 458 2.4 456 3.6 454 3.4 452 2.3 450 1.9 448 1.9 446 1.3 444 0.6 442 0.5 440 0.5 438 0.5 436 0.5 434 0.5 432 0.5 430 0.5 428 0.5 426 1.1 424 1.7 422 0.9 420 0.5 418 0.5 416 0.5 414 0.5 412 0.5 410 0.6 408 0.8 406 1.4 404 2.3 402 4.4 400 3.4 398 4.0 396 3.2 394 2.2 392 1.2 390 0.8 388 0.5 386 0.5 384 0.5 382 0.5 380 0.9 378 1.7 376 1.1 374 0.5 372 0.5 370 0.5 368 0.5 366 0.5 364 0.5 362 0.5 360 0.5 358 0.6 356 1.2 354 1.7 352 1.0 350 1.0 348 1.9 346 1.6 344 3.4 342 3.7 340 3.9 338 1.8 336 1.5 334 1.1 332 1.6 330 1.3 328 0.6 326 0.5 324 0.5 322 0.5 320 0.5 318 0.5 316 0.5 314 0.5 312 0.5 310 1.0 308 1.7 306 1.0 304 0.5 302 0.5 300 0.5 298 0.5 296 0.7 294 0.9 292 1.2 290 2.2 288 2.7 286 4.1 284 4.7 282 2.5 280 1.5 278 1.1 276 0.6 274 0.5 272 0.5 270 0.5 268 0.5 266 0.5 264 0.8 262 1.6 260 1.2 258 0.5 256 0.5 254 0.5 252 0.5 250 0.5 248 0.5 246 0.5 244 0.5 242 0.5 240 1.2 238 2.0 236 2.0 234 2.4 232 2.3 230 3.1 228 3.3 226 3.5 224 1.2 222 0.9 220 0.7 218 0.7 216 1.5 214 1.4 212 0.6 210 0.5 208 0.5 206 0.5 204 0.5 202 0.5 200 0.5 198 0.5 196 0.5 194 0.9 192 1.7 190 1.1 188 0.5 186 0.5 184 0.5 182 0.6 180 1.4 178 2.0 176 2.4 174 2.8 172 4.5 170 4.4 168 3.5 166 1.3 164 0.9 162 0.5 160 0.5 158 0.5 156 0.5 154 0.5 152 0.5 150 0.5 148 0.7 146 1.6 144 1.3 142 0.6 140 0.5 138 0.5 136 0.5 134 0.5 132 0.5 130 0.5 128 0.5 126 0.6 124 1.7 122 2.4 120 3.2 118 2.7 116 2.1 114 2.1 112 1.7 110 1.3 108 0.8 106 0.6 104 0.5 102 0.6 100 1.4 98 1.5 96 0.7 94 0.5 92 0.5 90 0.5 88 0.5 86 0.5 84 0.5 82 0.5 80 0.5 78 0.8 76 1.6 74 1.2 72 0.5 70 0.6 68 0.8 66 1.8 64 3.1 62 2.5 60 2.6 58 1.9 56 2.6 54 2.3 52 2.0 50 1.0 48 0.5 46 0.5 44 0.5 42 0.5 40 0.5 38 0.5 36 0.5 34 0.5 32 0.6 30 1.5 28 1.4 26 0.6Z" fill="#2d2d39"/>
  <path d="M626 102 H26 Q19 102 19 109 V121 Q19 128 26 128 H626" stroke="#4d4d5a" stroke-width="1.500" stroke-dasharray="7 3.670"/>
  <text x="40.800" y="26.300" text-anchor="middle" font-family="Liberation Serif, serif" font-size="17.500" fill="#4d4d5a">T</text>
  <g fill="#5f5f6d"><circle cx="37.800" cy="119.500" r="2"/><circle cx="43.800" cy="117.500" r="2"/><path d="M38.900 119.500 V111.300 L45 109.500 V117.500 H44 V112.800 L39.900 114 V119.500 Z"/></g>
 </svg>
 <div class="abs" style="left:59px;top:101.500px;font-size:14px;line-height:16px;color:#5b5b69;white-space:nowrap" id="t_addtext">+ Add text</div>
 <div class="abs" style="left:58.500px;top:197.500px;font-size:14.200px;line-height:16px;color:#676775;white-space:nowrap" id="t_addaudio">+ Add audio</div>
 <!-- clip -->
 <div class="abs" style="left:18px;top:131px;width:301px;height:52px;border-radius:6px;background:#3ecfa0;overflow:hidden">
  <svg class="abs" style="left:2px;top:2px;border-radius:4px" width="297" height="48" viewBox="0 0 297 48">
   <defs><filter id="nz" x="0" y="0" width="100%" height="100%" color-interpolation-filters="sRGB"><feTurbulence type="fractalNoise" baseFrequency=".2 .26" numOctaves="3" seed="8"/><feColorMatrix values="0 .5 0 0 -.14  1.250 0 0 0 .01  .25 0 .55 0 .32  0 0 0 0 1"/></filter></defs>
   <rect width="297" height="48" fill="#1a9cc0"/><rect width="297" height="48" filter="url(#nz)"/>
   <rect width="15" height="48" fill="#3f8f7f" opacity=".45"/><rect x="262" width="35" height="48" fill="#3f8f7f" opacity=".3"/>
   <path d="M5 17 V32 M9 17 V32 M288 17 V32 M292 17 V32" stroke="#fff" stroke-width="2"/>
  </svg>
 </div>
 <!-- tooltip -->
 <div class="abs" style="left:18px;top:108px;width:61px;height:20px;border-radius:3px;background:#3d3d4a;font-size:11px;font-weight:bold;line-height:20px;text-align:center;color:#fff" id="t_fish">Fish.mp4</div>
 <!-- playhead -->
 <div class="abs" style="left:15px;top:52px;width:2.200px;height:212px;background:#fff"></div>
 <svg class="abs" style="left:10px;top:39px" width="13" height="14" viewBox="0 0 13 14"><path d="M.3 2 Q.3 .3 2 .3 H11 Q12.700 .3 12.700 2 V7 L6.500 13.200 L.3 7 Z" fill="#fff"/></svg>
 <!-- h scrollbar -->
 <div class="abs" style="left:4px;top:253px;width:417px;height:6px;border-radius:3px;background:#6b6b79"></div>
</div>

<div id="side" class="abs">
 <!-- logo -->
 <svg class="abs" style="left:15px;top:14px" width="34" height="36" viewBox="0 0 34 36">
  <defs><linearGradient id="lg1" x1="0" y1="0" x2="1" y2="1"><stop offset="0" stop-color="#c394ee"/><stop offset="1" stop-color="#8556e2"/></linearGradient><linearGradient id="lg2" x1="0" y1="0" x2="1" y2="0"><stop offset="0" stop-color="#5d46e2"/><stop offset="1" stop-color="#a35fe8"/></linearGradient></defs>
  <path d="M1.700 9.500 Q1.700 7.700 3.500 7.200 L27.300 1.800 Q29.600 1.400 30.200 3.600 L31.400 8.600 L1.700 14.500 Z" fill="url(#lg2)"/>
  <path d="M1.700 11.400 H31 Q32.200 11.400 32.200 12.600 V19 H1.700 Z" fill="#cc9af0"/>
  <rect x="1.700" y="18" width="30.500" height="9" fill="url(#lg1)"/>
  <path d="M1.700 26 H32.200 V31.600 Q32.200 33.800 30 33.800 H3.900 Q1.700 33.800 1.700 31.600 Z" fill="#6346e4"/>
 </svg>
 <!-- Your media -->
 <div class="nav" style="top:78px;height:48px">
  <svg style="top:2px" width="22" height="18" viewBox="0 0 22 18" fill="none" stroke="#aeaebd" stroke-width="1.4" stroke-linejoin="round"><path d="M1.7 3.2 Q1.7 1.2 3.7 1.2 H7 Q8 1.2 8.8 2 L10.3 3.5 H18.3 Q20.3 3.5 20.3 5.5 V14.5 Q20.3 16.5 18.3 16.5 H3.7 Q1.7 16.5 1.7 14.5 Z"/><path d="M1.7 6.3 H7 Q8 6.3 8.8 5.5 L10.3 3.5"/></svg>
  <span style="top:27px">Your media</span>
 </div>
 <!-- Record & create -->
 <div class="nav" style="top:136px;height:60px">
  <svg style="top:2px" width="22" height="18" viewBox="0 0 22 18" fill="none" stroke="#aeaebd" stroke-width="1.4" stroke-linejoin="round"><rect x="1.7" y="2" width="13" height="14" rx="3"/><path d="M14.7 7 L19.5 3.5 Q20.3 3.2 20.3 4 V14 Q20.3 14.8 19.5 14.5 L14.7 11"/></svg>
  <span style="top:27px;line-height:11px">Record &amp;<br>create</span>
 </div>
 <!-- Templates -->
 <div class="nav" style="top:204px;height:50px">
  <svg style="top:2px" width="22" height="22" viewBox="0 0 22 22" fill="none" stroke="#aeaebd" stroke-width="1.4" stroke-linejoin="round"><path d="M2.800 5.500 Q2.800 3.500 4.800 3.500 H10.500 V12 H2.800 Z"/><path d="M2.800 12 H10.500 V20 H4.800 Q2.800 20 2.800 18 Z"/><path d="M10.500 12 H18.500 V18 Q18.500 20 16.500 20 H10.500 Z"/><path d="M11.6 6.2 L15 2.5 Q16 1.6 17 2.5 L20.4 5.9 Q21.2 6.9 20.4 7.9 L16.9 11.6"/></svg>
  <span style="top:29px">Templates</span>
 </div>
 <!-- Music -->
 <div class="nav" style="top:268px;height:50px">
  <svg style="top:1px" width="20" height="22" viewBox="0 0 20 22" fill="none" stroke="#aeaebd" stroke-width="1.4" stroke-linejoin="round"><circle cx="4.3" cy="18" r="2.7"/><circle cx="14.5" cy="16" r="2.7"/><path d="M7 18 V5 L17.2 2 V16"/><path d="M7 9 L17.2 6"/></svg>
  <span style="top:29px">Music &amp; SFX</span>
 </div>
 <!-- Stock video -->
 <div class="nav" style="top:334px;height:48px">
  <svg style="top:2px" width="22" height="18" viewBox="0 0 22 18" fill="none" stroke="#aeaebd" stroke-width="1.4" stroke-linejoin="round"><rect x="1.7" y="1.7" width="18.6" height="14.6" rx="2"/><path d="M5.7 1.7 V16.3 M16.3 1.7 V16.3 M1.7 5.3 H5.7 M1.7 9 H5.7 M1.7 12.7 H5.7 M16.3 5.3 H20.3 M16.3 9 H20.3 M16.3 12.7 H20.3"/></svg>
  <span style="top:27px">Stock video</span>
 </div>
 <!-- Stock images -->
 <div class="nav" style="top:392px;height:56px">
  <svg style="top:1px" width="20" height="20" viewBox="0 0 20 20" fill="none" stroke="#aeaebd" stroke-width="1.4" stroke-linejoin="round"><rect x="2" y="1.800" width="16.600" height="16.600" rx="3"/><circle cx="13.500" cy="6.700" r="1.600"/><path d="M3.300 17.500 L9.300 11.500 Q10.300 10.700 11.300 11.500 L17.300 17.500"/></svg>
  <span style="top:27px;line-height:11px">Stock<br>images</span>
 </div>
 <!-- Text active -->
 <div class="abs" style="left:0;top:448px;width:63px;height:64px;background:#272731"></div>
 <div class="nav" style="top:462px;height:48px;color:#fff">
  <svg style="top:0px" width="20" height="22" viewBox="0 0 20 22"><text x="10" y="19" text-anchor="middle" font-family="Liberation Serif, serif" font-size="23.800" fill="#fff" stroke="#fff" stroke-width=".5">T</text></svg>
  <span style="top:27px">Text</span>
 </div>
 <!-- Graphics -->
 <div class="nav" style="top:526px;height:48px">
  <svg style="top:2px" width="20" height="18" viewBox="0 0 20 18" fill="none" stroke="#aeaebd" stroke-width="1.4" stroke-linejoin="round"><path d="M4.7 7 L1.6 4 Q0.6 2.6 1.7 1.5 Q3 0.5 4.7 2.2 Q6.4 0.5 7.7 1.5 Q8.8 2.6 7.8 4 Z"/><path d="M14.5 1 L18.3 7 H10.7 Z"/><rect x="1.2" y="10.5" width="6.6" height="6.6"/><circle cx="14.5" cy="13.8" r="3.3"/></svg>
  <span style="top:27px">Graphics</span>
 </div>
 <!-- partial transitions icon -->
 <div class="abs" style="left:22px;top:592px;width:20px;height:5px;overflow:hidden">
  <svg class="abs" style="left:0;top:0" width="20" height="16" viewBox="0 0 20 16"><path d="M1 14 V5 Q1 1 5 1 H10 V14 Z" fill="#aeaebd"/><path d="M10 1.7 H16 Q18.6 1.7 18.6 4.5 V14" fill="none" stroke="#aeaebd" stroke-width="1.4"/></svg>
 </div>
</div>

<div id="panel" class="abs">
 <div class="hd" style="top:16.500px">Plain text</div>
 <div class="th" style="left:17px;top:40px"><div style="top:37.500px;left:-1px;font-size:19.300px;font-weight:bold;color:#fff">Text</div></div>
 <div class="hd" style="top:154px">Title</div>
 <!-- row 1 -->
 <div class="th" style="left:17px;top:178px"><div style="top:40px;font-family:'Liberation Serif',serif;font-size:15.300px;font-weight:bold;color:#f2f2f2">Statement</div><i class="abs" style="left:37px;top:63px;width:23px;height:2px;background:#f2a88c"></i></div>
 <div class="th" style="left:127px;top:178px"><div style="top:42px;font-size:12px;font-weight:bold;color:#e6e6e6;letter-spacing:.2px">Typewr</div><i class="abs" style="left:71px;top:43px;width:1px;height:13px;background:#fff"></i></div>
 <!-- row 2 -->
 <div class="th" style="left:17px;top:288px;background:#4f3fc4"><div style="top:34px;font-size:22px;font-weight:bold;color:#0e0b22">Stencil</div></div>
 <div class="th" style="left:127px;top:288px">
  <i class="abs" style="left:-11px;top:-8px;width:119px;height:119px;border-radius:50%;background:#3a6bb5"></i>
  <i class="abs" style="left:10px;top:10px;width:78px;height:78px;border-radius:50%;background:#4a8de6"></i>
  <div style="top:40px;font-size:18px;font-weight:bold;color:#fff">Circular</div>
 </div>
 <!-- row 3 -->
 <div class="th" style="left:17px;top:398px"><div style="top:39.500px;font-size:17px;font-weight:bold;color:#fff;text-shadow:1.200px 1.200px 0 #c43a30;letter-spacing:.3px;-webkit-text-stroke:1.300px #fff;transform:scaleX(1.14)">GROOVY</div></div>
 <div class="th" style="left:127px;top:398px">
  <svg class="abs" style="left:0;top:0" width="98" height="98" viewBox="0 0 98 98" fill="none"><circle cx="48.500" cy="50.500" r="7.500" stroke="#a04ad0" stroke-width="1.200"/><circle cx="70.500" cy="45.500" r="7" stroke="#5a3ee0" stroke-width="1.200"/><path d="M25 53 Q29 60 35 56" stroke="#2f8f6f" stroke-width="1"/><path d="M38 63.500 L41 65" stroke="#35c58d" stroke-width="1.500"/><circle cx="33.500" cy="59" r=".9" fill="#35c58d"/><circle cx="44" cy="57" r=".8" fill="#35c58d"/></svg>
  <div style="top:42.700px;font-size:12.600px;color:#f0f0f0;letter-spacing:.55px;-webkit-text-stroke:.35px #f0f0f0">Fireworks</div>
 </div>
 <!-- row 4 -->
 <div class="th" style="left:17px;top:508px"><div style="top:37.500px;font-size:23.500px;color:#747479;letter-spacing:2.900px;filter:blur(.6px);padding-left:0px;left:-1px;-webkit-text-stroke:.5px #747479">Smoke</div></div>
 <div class="th" style="left:127px;top:508px">
  <svg class="abs" style="left:0;top:0" width="98" height="98" viewBox="0 0 98 98">
   <defs><filter id="glow" x="-30%" y="-30%" width="160%" height="160%"><feGaussianBlur stdDeviation="3.600"/></filter></defs>
   <g font-family="Liberation Sans, sans-serif" font-weight="bold" font-size="29" text-anchor="middle">
    <g filter="url(#glow)" fill="#96302a" stroke="#96302a" stroke-width="5" opacity=".8"><text transform="translate(49 45.600) scale(.55 1)">MAKE IT</text><text transform="translate(49.500 72) scale(.5 1)">GLOW</text></g>
    <g fill="#1e0504" stroke="#ffeceb"><text transform="translate(49 45.600) scale(.55 1)" style="stroke-width:1.300">MAKE IT</text><text transform="translate(49.500 72) scale(.5 1)" style="stroke-width:1.400">GLOW</text></g>
   </g>
  </svg>
 </div>
 <!-- scrollbar -->
 <div class="abs" style="left:231px;top:3px;width:6px;height:131px;border-radius:3px;background:#555560"></div>
 <!-- mouse cursor -->
 <svg class="abs" style="left:121px;top:109px" width="14" height="22" viewBox="0 0 14 22"><path d="M1.500 1.500 V17 L5 13.500 L7.800 19.800 L10.300 18.700 L7.500 12.600 H12.300 Z" fill="#fff" stroke="#000" stroke-width="1"/></svg>
</div>

<div id="right" class="abs">
 <!-- captions -->
 <svg class="abs" style="left:21px;top:15px" width="24" height="20" viewBox="0 0 24 20" fill="none" stroke="#aeaebd" stroke-width="1.400"><rect x="1.700" y="2.200" width="19.600" height="15.200" rx="2.500"/><text x="11.900" y="13.200" text-anchor="middle" font-family="Liberation Sans, sans-serif" font-size="9.400" letter-spacing=".8" fill="#aeaebd" stroke="#aeaebd" stroke-width=".45">CC</text></svg>
 <div class="rn" style="top:41px">Captions</div>
 <div class="abs" style="left:10px;top:68px;width:44px;height:1.500px;background:#3c3c48"></div>
 <!-- fade -->
 <svg class="abs" style="left:21px;top:88px" width="22" height="22" viewBox="0 0 22 22"><defs><clipPath id="fc"><circle cx="11" cy="11" r="9.800"/></clipPath></defs><g clip-path="url(#fc)" fill="#b2b2c2"><rect x="0" y="0" width="9.300" height="22"/><rect x="10.500" y="0" width="2.600" height="22"/><rect x="14.300" y="0" width="2" height="22"/><rect x="17.500" y="0" width="1.300" height="22"/></g><circle cx="11" cy="11" r="9.500" fill="none" stroke="#b2b2c2" stroke-width="1"/></svg>
 <div class="rn" style="top:115px">Fade</div>
 <!-- filters -->
 <svg class="abs" style="left:21px;top:152px" width="22" height="22" viewBox="0 0 22 22" fill="none" stroke="#aeaebd" stroke-width="1.400" stroke-linejoin="round"><path d="M2.300 17.300 L13.600 6 Q14.600 5.200 15.600 6 Q16.500 7 15.600 8 L4.300 19.300 Q3.300 20.200 2.300 19.300 Q1.500 18.300 2.300 17.300 Z M11.500 8.300 L13.400 10.200"/><path d="M7.200 2 L7.900 4 L9.900 4.700 L7.900 5.400 L7.200 7.400 L6.500 5.400 L4.500 4.700 L6.500 4 Z M18.300 1.500 L18.800 3 L20.300 3.500 L18.800 4 L18.300 5.500 L17.800 4 L16.300 3.500 L17.800 3 Z M17.800 11.500 L18.400 13.300 L20.200 13.900 L18.400 14.500 L17.800 16.300 L17.200 14.500 L15.400 13.900 L17.200 13.300 Z" fill="#aeaebd" stroke="none"/></svg>
 <div class="rn" style="top:179px">Filters</div>
 <!-- adjust colors -->
 <svg class="abs" style="left:21px;top:209px" width="22" height="22" viewBox="0 0 22 22"><circle cx="11" cy="11.300" r="9" fill="none" stroke="#b2b2c2" stroke-width="1.400"/><path d="M11 2.300 A9 9 0 0 1 11 20.300 Z" fill="#b2b2c2"/></svg>
 <div class="rn" style="top:237px">Adjust</div><div class="rn" style="top:248.300px">colors</div>
 <!-- speed -->
 <svg class="abs" style="left:21px;top:279px" width="22" height="22" viewBox="0 0 22 22" fill="none" stroke="#aeaebd" stroke-width="1.400" stroke-linecap="round"><path d="M4.300 18.800 A9.300 9.300 0 1 1 17.700 18.800"/><path d="M11 13.300 L14.600 7.200" stroke-width="1.600"/><circle cx="10.800" cy="13.500" r="1.600" fill="#aeaebd" stroke="none"/><path d="M11 4.500 V5.600 M5.200 7.300 L6 8.100 M3.600 12.500 H4.700 M17.300 12.500 H18.400" stroke-width="1.100"/></svg>
 <div class="rn" style="top:307px">Speed</div>
</div>

</div>
</body>
</html>
